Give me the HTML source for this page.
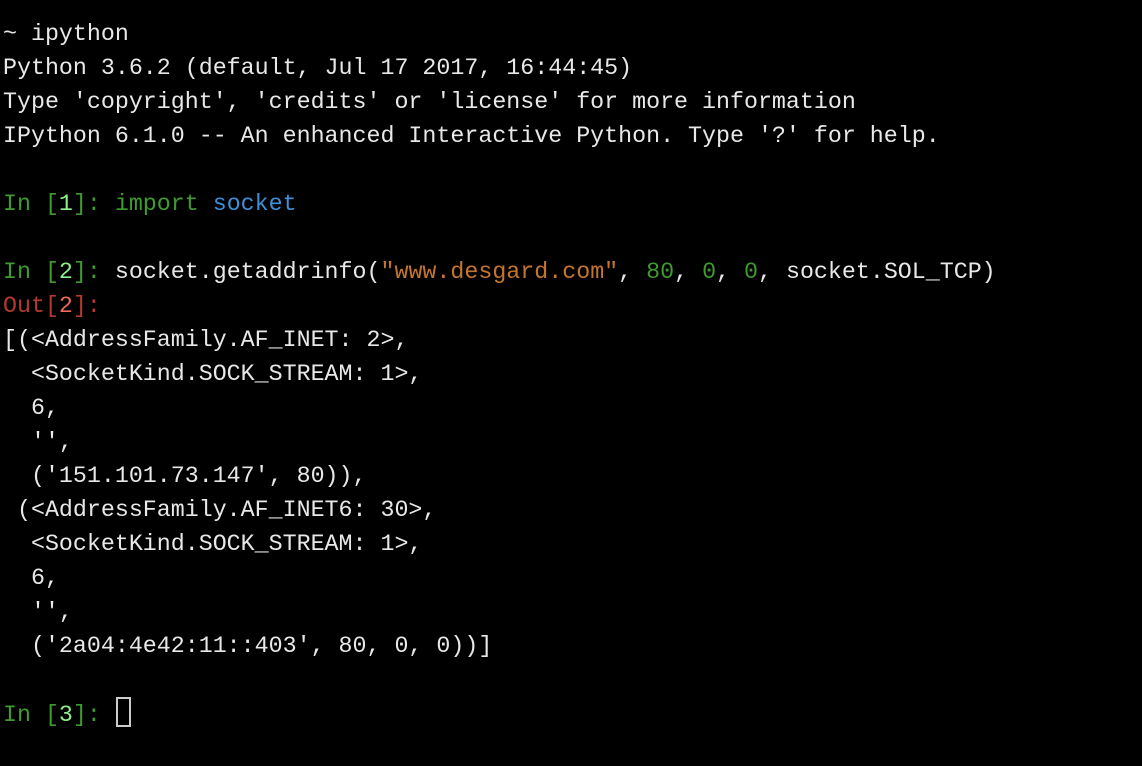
<!DOCTYPE html>
<html><head><meta charset="utf-8"><style>
html,body{margin:0;padding:0;background:#000;width:1142px;height:766px;overflow:hidden}
pre{margin:0;padding:17px 0 0 3px;font-family:"Liberation Mono","DejaVu Sans Mono",monospace;font-size:23.3px;line-height:34px;color:#e8e8e8;white-space:pre}
.g{color:#3f9a2f}.G{color:#8ef08a}.b{color:#3d8fd8}.r{color:#b33a2e}.R{color:#f06a5e}.s{color:#c4762f}.n{color:#3f9a2f}
.cur{display:inline-block;width:11px;height:26px;border:2px solid #ccc;vertical-align:-6px;margin-left:1px}
</style></head><body><pre>~ ipython
Python 3.6.2 (default, Jul 17 2017, 16:44:45)
Type 'copyright', 'credits' or 'license' for more information
IPython 6.1.0 -- An enhanced Interactive Python. Type '?' for help.

<span class="g">In [</span><span class="G">1</span><span class="g">]: import</span> <span class="b">socket</span>

<span class="g">In [</span><span class="G">2</span><span class="g">]:</span> socket.getaddrinfo(<span class="s">"www.desgard.com"</span>, <span class="n">80</span>, <span class="n">0</span>, <span class="n">0</span>, socket.SOL_TCP)
<span class="r">Out[</span><span class="R">2</span><span class="r">]:</span>
[(&lt;AddressFamily.AF_INET: 2&gt;,
  &lt;SocketKind.SOCK_STREAM: 1&gt;,
  6,
  '',
  ('151.101.73.147', 80)),
 (&lt;AddressFamily.AF_INET6: 30&gt;,
  &lt;SocketKind.SOCK_STREAM: 1&gt;,
  6,
  '',
  ('2a04:4e42:11::403', 80, 0, 0))]

<span class="g">In [</span><span class="G">3</span><span class="g">]:</span> <span class="cur"></span></pre></body></html>
